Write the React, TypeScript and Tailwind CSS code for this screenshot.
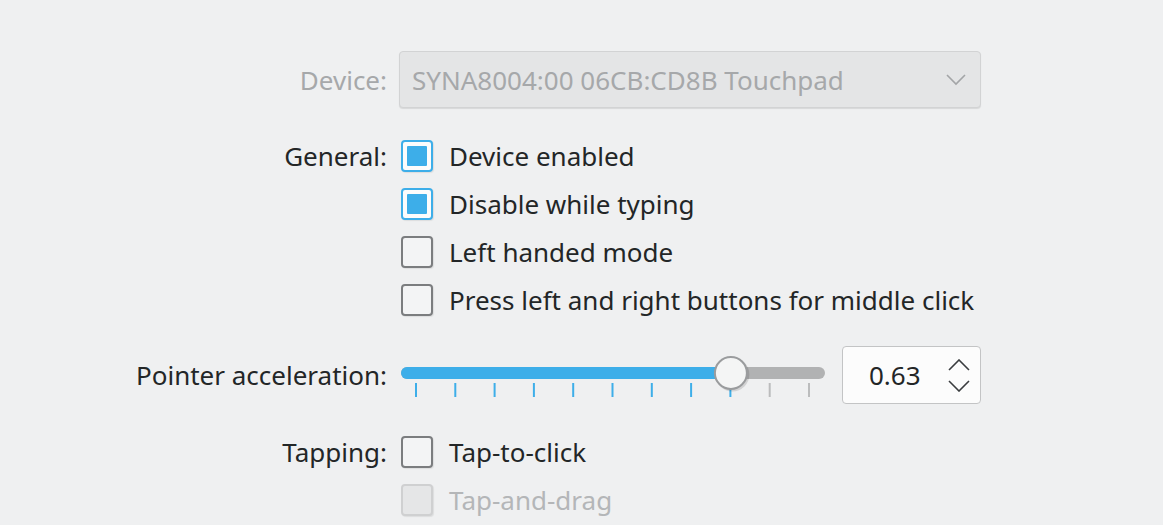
import React from 'react';

const font = { fontFamily: '"Noto Sans", "Open Sans", sans-serif' };

const Checkbox = ({ checked = false, disabled = false }: { checked?: boolean; disabled?: boolean }) => {
  const border = checked
    ? 'border-[#3daee9] bg-[#fcfcfc]'
    : disabled
      ? 'border-[#cfd0d1] bg-[#e5e6e7]'
      : 'border-[#7b7d7f] bg-[#f3f4f5]';
  return (
    <div
      className={`ml-[2px] w-[32px] h-[32px] rounded-[4px] border-2 ${border} flex items-center justify-center shrink-0 shadow-[1px_1px_1px_rgba(0,0,0,0.08)]`}
    >
      {checked && <div className="w-[20px] h-[20px] bg-[#3daee9] rounded-[1px]" />}
    </div>
  );
};

const Row = ({ label, disabledLabel, children }: { label?: string; disabledLabel?: boolean; children: React.ReactNode }) => (
  <div className="flex items-center gap-[12px]">
    <div className={`w-[387px] text-right ${disabledLabel ? 'text-[#a6a8aa]' : 'text-[#232627]'}`}>{label}</div>
    <div className="flex items-center">{children}</div>
  </div>
);

const CheckRow = ({ label, text, checked, disabled }: { label?: string; text: string; checked?: boolean; disabled?: boolean }) => (
  <Row label={label}>
    <div className="h-[48px] flex items-center gap-[16px]">
      <Checkbox checked={checked} disabled={disabled} />
      <span className={disabled ? 'text-[#b4b6b8]' : 'text-[#232627]'}>{text}</span>
    </div>
  </Row>
);

const Slider = () => {
  const ticks = Array.from({ length: 11 }, (_, i) => 17 + i * 39.3);
  const handle = ticks[8] + 0.5;
  return (
    <svg width="428" height="58" viewBox="0 0 428 58" className="block">
      <rect x="2" y="21" width="424" height="12" rx="6" fill="#b1b2b3" />
      <rect x="2" y="21" width={handle} height="12" rx="6" fill="#3daee9" />
      {ticks.map((x, i) => (
        <line
          key={i}
          x1={x}
          x2={x}
          y1="37"
          y2="51"
          stroke={i <= 8 ? '#3daee9' : '#bbbcbd'}
          strokeWidth="2"
        />
      ))}
      <circle cx={handle} cy="27" r="17" fill="#000" opacity="0.12" transform="translate(1.5 1.5)" />
      <circle cx={handle} cy="27" r="16" fill="#f4f5f5" stroke="#9a9c9e" strokeWidth="2" />
    </svg>
  );
};

const App = () => {
  return (
    <div className="w-[1163px] h-[525px] bg-[#eff0f1] overflow-hidden text-[26px] leading-none" style={font}>
      <div className="pt-[51px] flex flex-col">
        <Row label="Device:" disabledLabel>
          <div className="w-[582px] h-[57px] rounded-[4px] border border-[#d2d3d4] bg-[#e4e5e6] shadow-[0_1px_1px_rgba(0,0,0,0.1)] flex items-center justify-between pl-[12px] pr-[14px]">
            <span className="text-[#a6a8aa]">SYNA8004:00 06CB:CD8B Touchpad</span>
            <svg width="20" height="12" viewBox="0 0 20 12">
              <path d="M1 1 L10 10 L19 1" fill="none" stroke="#a3a5a7" strokeWidth="1.6" />
            </svg>
          </div>
        </Row>

        <div className="mt-[24px] flex flex-col">
          <CheckRow label="General:" text="Device enabled" checked />
          <CheckRow text="Disable while typing" checked />
          <CheckRow text="Left handed mode" />
          <CheckRow text="Press left and right buttons for middle click" />
        </div>

        <div className="mt-[22px]">
          <Row label="Pointer acceleration:">
            <div className="h-[58px] flex items-center gap-[15px]">
              <Slider />
              <div className="w-[139px] h-[58px] rounded-[4px] border border-[#c3c4c5] bg-[#fcfcfc] flex items-center justify-between pl-[26px] pr-[10px]">
                <span className="text-[#232627]">0.63</span>
                <div className="flex flex-col gap-[9px]">
                  <svg width="22" height="12" viewBox="0 0 22 12">
                    <path d="M1 11 L11 1 L21 11" fill="none" stroke="#3a3d3f" strokeWidth="1.6" />
                  </svg>
                  <svg width="22" height="12" viewBox="0 0 22 12">
                    <path d="M1 1 L11 11 L21 1" fill="none" stroke="#3a3d3f" strokeWidth="1.6" />
                  </svg>
                </div>
              </div>
            </div>
          </Row>
        </div>

        <div className="mt-[24px] flex flex-col">
          <CheckRow label="Tapping:" text="Tap-to-click" />
          <CheckRow text="Tap-and-drag" disabled />
        </div>
      </div>
    </div>
  );
};

export default App;
